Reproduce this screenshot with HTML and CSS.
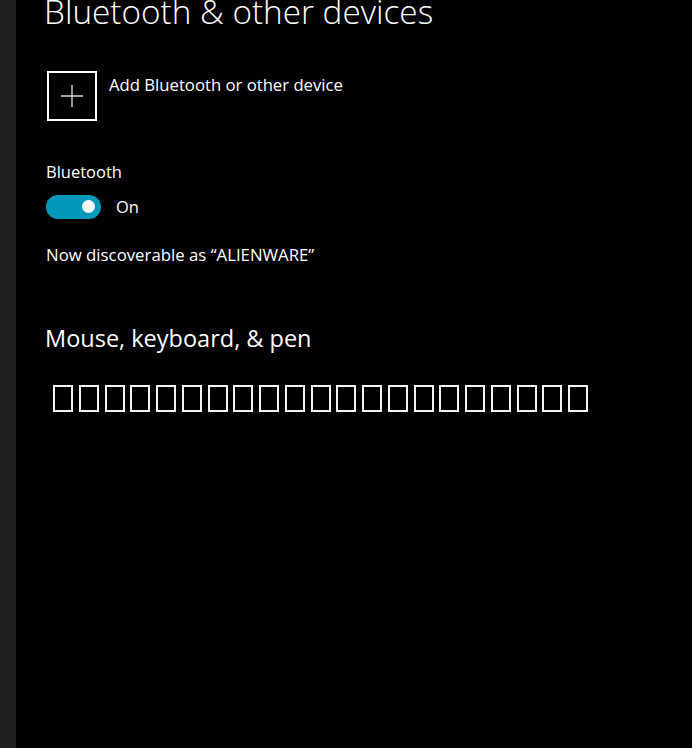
FILE: index.html
```html
<!DOCTYPE html>
<html lang="en">
<head>
<meta charset="utf-8">
<title>Bluetooth &amp; other devices</title>
<link rel="stylesheet" href="styles.css">
</head>
<body>
<div class="app">
  <aside class="rail"></aside>
  <main class="content">
    <h1 class="title">Bluetooth &amp; other devices</h1>
    <div class="add-row">
      <div class="add-box">
        <svg width="24" height="24" viewBox="0 0 24 24" aria-hidden="true"><path d="M12 1v22M1 12h22" stroke="#d6d6d6" stroke-width="1.4" fill="none"/></svg>
      </div>
      <span class="add-label">Add Bluetooth or other device</span>
    </div>
    <div class="label">Bluetooth</div>
    <div class="toggle-row">
      <span class="toggle"><span class="knob"></span></span>
      <span class="toggle-text">On</span>
    </div>
    <div class="discover">Now discoverable as “ALIENWARE”</div>
    <h2 class="section">Mouse, keyboard, &amp; pen</h2>
    <div class="tofu" aria-hidden="true">
      <span></span><span></span><span></span><span></span><span></span><span></span><span></span>
      <span></span><span></span><span></span><span></span><span></span><span></span><span></span>
      <span></span><span></span><span></span><span></span><span></span><span></span><span></span>
    </div>
  </main>
</div>
</body>
</html>
```

FILE: styles.css
```css
html, body {
  margin: 0;
  padding: 0;
  background: #000;
  height: 100%;
}
body {
  font-family: "Open Sans", "Noto Sans", sans-serif;
  color: #fff;
  overflow: hidden;
}
.app {
  display: flex;
  height: 748px;
}
.rail {
  width: 16px;
  flex: none;
  background: #1f1f1f;
}
.content {
  flex: 1;
  padding-left: 28px;
  display: flex;
  flex-direction: column;
  align-items: flex-start;
}
.title {
  margin: -11.3px 0 0 0;
  font-weight: 300;
  font-size: 33.3px;
  line-height: 45px;
  white-space: nowrap;
}
.add-row {
  display: flex;
  align-items: flex-start;
  margin-top: 37.3px;
  margin-left: 3px;
}
.add-box {
  width: 46px;
  height: 46px;
  border: 2px solid #fff;
  display: flex;
  align-items: center;
  justify-content: center;
}
.add-label {
  margin-left: 12px;
  margin-top: 1.6px;
  font-size: 16.7px;
  line-height: 24px;
}
.label {
  margin-top: 38.6px;
  margin-left: 2px;
  font-size: 16.5px;
  line-height: 24px;
}
.toggle-row {
  display: flex;
  align-items: center;
  margin-top: 11.4px;
  margin-left: 2px;
}
.toggle {
  width: 55px;
  height: 24px;
  border-radius: 12px;
  background: #0099bc;
  display: flex;
  align-items: center;
  justify-content: flex-end;
  padding-right: 6px;
  box-sizing: border-box;
}
.knob {
  width: 13px;
  height: 13px;
  border-radius: 50%;
  background: #fff;
}
.toggle-text {
  margin-left: 15px;
  font-size: 16.5px;
  line-height: 24px;
}
.discover {
  margin-top: 24px;
  margin-left: 2px;
  font-size: 16.8px;
  line-height: 24px;
}
.section {
  margin: 55.5px 0 0 1px;
  font-weight: 400;
  font-size: 23.5px;
  line-height: 32px;
}
.tofu {
  display: flex;
  gap: 5.75px;
  margin-top: 31px;
  margin-left: 9px;
}
.tofu span {
  width: 20px;
  height: 27px;
  box-sizing: border-box;
  border: 2.5px solid #f4f4f4;
}
```
